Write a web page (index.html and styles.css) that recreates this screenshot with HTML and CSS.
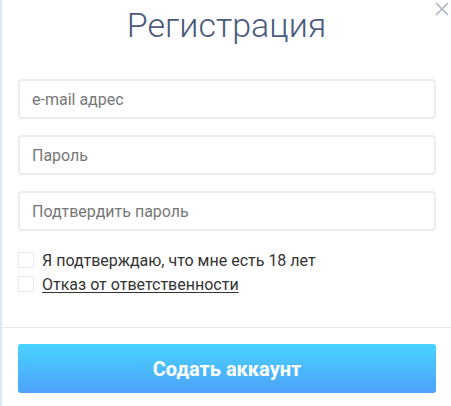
FILE: index.html
```html
<!DOCTYPE html>
<html lang="ru">
<head>
<meta charset="utf-8">
<link rel="stylesheet" href="styles.css">
</head>
<body>
<div class="modal">
  <button class="close" aria-label="Закрыть">
    <svg width="14" height="14" viewBox="0 0 14 14"><path d="M1 1 L13 13 M13 1 L1 13" stroke="#aab4c4" stroke-width="1.6" fill="none"/></svg>
  </button>
  <h1 class="title">Регистрация</h1>
  <form class="form">
    <div class="fields">
      <input class="field" type="email" placeholder="e-mail адрес">
      <input class="field" type="password" placeholder="Пароль">
      <input class="field" type="password" placeholder="Подтвердить пароль">
    </div>
    <div class="checks">
      <label class="check"><span class="box"></span><span>Я подтверждаю, что мне есть 18 лет</span></label>
      <label class="check"><span class="box"></span><a class="link" href="#">Отказ от ответственности</a></label>
    </div>
  </form>
  <div class="footer">
    <button class="submit">Содать аккаунт</button>
  </div>
</div>
</body>
</html>
```
FILE: styles.css
```css
html, body {
  margin: 0;
  padding: 0;
  background: #ffffff;
  font-family: Roboto, "Liberation Sans", sans-serif;
}
.modal {
  position: relative;
  width: 449px;
  height: 406px;
  border-left: 2px solid #dce7f3;
  background: #fff;
  overflow: hidden;
}
.close {
  position: absolute;
  top: 2px;
  right: 2px;
  width: 14px;
  height: 14px;
  padding: 0;
  border: 0;
  background: none;
  display: flex;
}
.title {
  margin: 0;
  height: 79px;
  padding-top: 5px;
  box-sizing: border-box;
  text-align: center;
  font-weight: 300;
  font-size: 34px;
  line-height: 40px;
  color: #4a5b7d;
}
.form {
  padding: 0 15px 0 16px;
}
.fields {
  display: flex;
  flex-direction: column;
  gap: 16px;
}
.field {
  height: 40px;
  box-sizing: border-box;
  border: 2px solid #ececec;
  border-radius: 4px;
  padding: 0 12px;
  font-family: Roboto, "Liberation Sans", sans-serif;
  font-size: 16px;
  color: #333;
  outline: none;
}
.field::placeholder {
  color: #777;
}
.checks {
  display: flex;
  flex-direction: column;
  gap: 8px;
  margin-top: 21px;
}
.check {
  display: flex;
  align-items: center;
  gap: 8px;
  height: 16px;
  font-size: 16px;
  color: #333;
}
.box {
  width: 14px;
  height: 14px;
  border: 1px solid #ebebeb;
  flex: none;
}
.link {
  color: #333;
  text-decoration: underline;
  text-underline-offset: 2px;
}
.footer {
  margin-top: 35px;
  border-top: 1px solid #e5e8ec;
  padding: 16px 15px 0 16px;
}
.submit {
  display: block;
  width: 100%;
  height: 49px;
  border: 0;
  border-radius: 3px;
  background: linear-gradient(to bottom, #48d3fe, #4ea1fa);
  color: #fff;
  font-family: Roboto, "Liberation Sans", sans-serif;
  font-weight: 700;
  font-size: 20px;
}
```
